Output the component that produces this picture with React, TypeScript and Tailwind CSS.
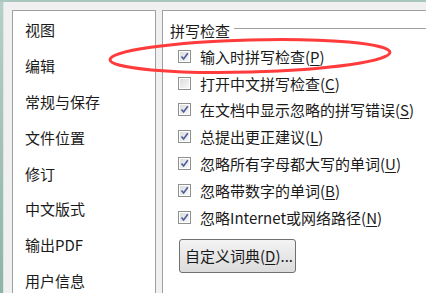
import React from "react";

const font = { fontFamily: '"Noto Sans CJK SC", "Microsoft YaHei", sans-serif' };

function Check({ checked }: { checked: boolean }) {
  return (
    <div className="w-[13px] h-[13px] border border-[#8e8f8f] bg-white p-[1px] shrink-0">
      <div className="w-full h-full bg-gradient-to-br from-[#dcdcdc] to-[#f8f8f8] relative">
        {checked && (
          <svg viewBox="0 0 9 9" className="absolute inset-0 w-[9px] h-[9px]">
            <path d="M1.5 4.5 L3.6 7 L7.8 1.2" fill="none" stroke="#4a5d9c" strokeWidth="1.6" />
          </svg>
        )}
      </div>
    </div>
  );
}

function Label({ text, acc }: { text: string; acc: string }) {
  return (
    <span>
      {text}(<span className="underline underline-offset-2">{acc}</span>)
    </span>
  );
}

const rows: { t: string; a: string; c: boolean }[] = [
  { t: "输入时拼写检查", a: "P", c: true },
  { t: "打开中文拼写检查", a: "C", c: false },
  { t: "在文档中显示忽略的拼写错误", a: "S", c: true },
  { t: "总提出更正建议", a: "L", c: true },
  { t: "忽略所有字母都大写的单词", a: "U", c: true },
  { t: "忽略带数字的单词", a: "B", c: true },
  { t: "忽略Internet或网络路径", a: "N", c: true },
];

const nav = ["视图", "编辑", "常规与保存", "文件位置", "修订", "中文版式", "输出PDF", "用户信息"];

export default function App() {
  return (
    <div
      className="w-[426px] h-[293px] relative overflow-hidden bg-[#f0f0f0] text-[15px] text-[#1a1a1a] flex flex-col"
      style={font}
    >
      <div className="h-[2px] bg-[#a9c6bf] shrink-0" />
      <div className="flex flex-1 min-h-0">
        <div className="w-[3px] bg-gradient-to-b from-[#b7cec8] to-[#8fb3a8] shrink-0" />
        <div className="w-[1px] bg-[#dbe6e3] shrink-0" />
        <div className="ml-[8px] mt-[8px] w-[144px] h-[300px] border border-[#a0a0a0] bg-white pt-[1px] pl-[12px] shrink-0">
          {nav.map((n) => (
            <div key={n} className="h-[35.8px] flex items-center leading-none">
              {n}
            </div>
          ))}
        </div>
        <div className="ml-[6px] mt-[8px] flex-1 h-[300px] border-l border-t border-[#a0a0a0] bg-white pl-[7px]">
          <div className="flex items-center h-[22px] mt-[8px]">
            <span className="leading-none">拼写检查</span>
            <div className="flex-1 h-[1px] bg-[#a0a0a0] ml-[4px] -mt-[4px]" />
          </div>
          <div className="pl-[8px] mt-[2px]">
            {rows.map((r) => (
              <div key={r.a} className="h-[26.8px] flex items-center gap-[9px] leading-none">
                <Check checked={r.c} />
                <Label text={r.t} acc={r.a} />
              </div>
            ))}
          </div>
          <div className="pl-[9px] mt-[8px]">
            <button
              className="w-[117px] h-[34px] rounded-[3px] border border-[#707070] bg-gradient-to-b from-[#f3f3f3] to-[#dcdcdc] text-left pl-[5px] leading-none"
              style={font}
            >
              自定义词典(<span className="underline underline-offset-2">D</span>)...
            </button>
          </div>
        </div>
      </div>
      <svg className="absolute left-0 top-0 pointer-events-none" width="426" height="293">
        <ellipse cx="250" cy="56" rx="140" ry="16" fill="none" stroke="#ff3b3b" strokeWidth="3" transform="rotate(-1.5 250 56)" />
      </svg>
    </div>
  );
}
